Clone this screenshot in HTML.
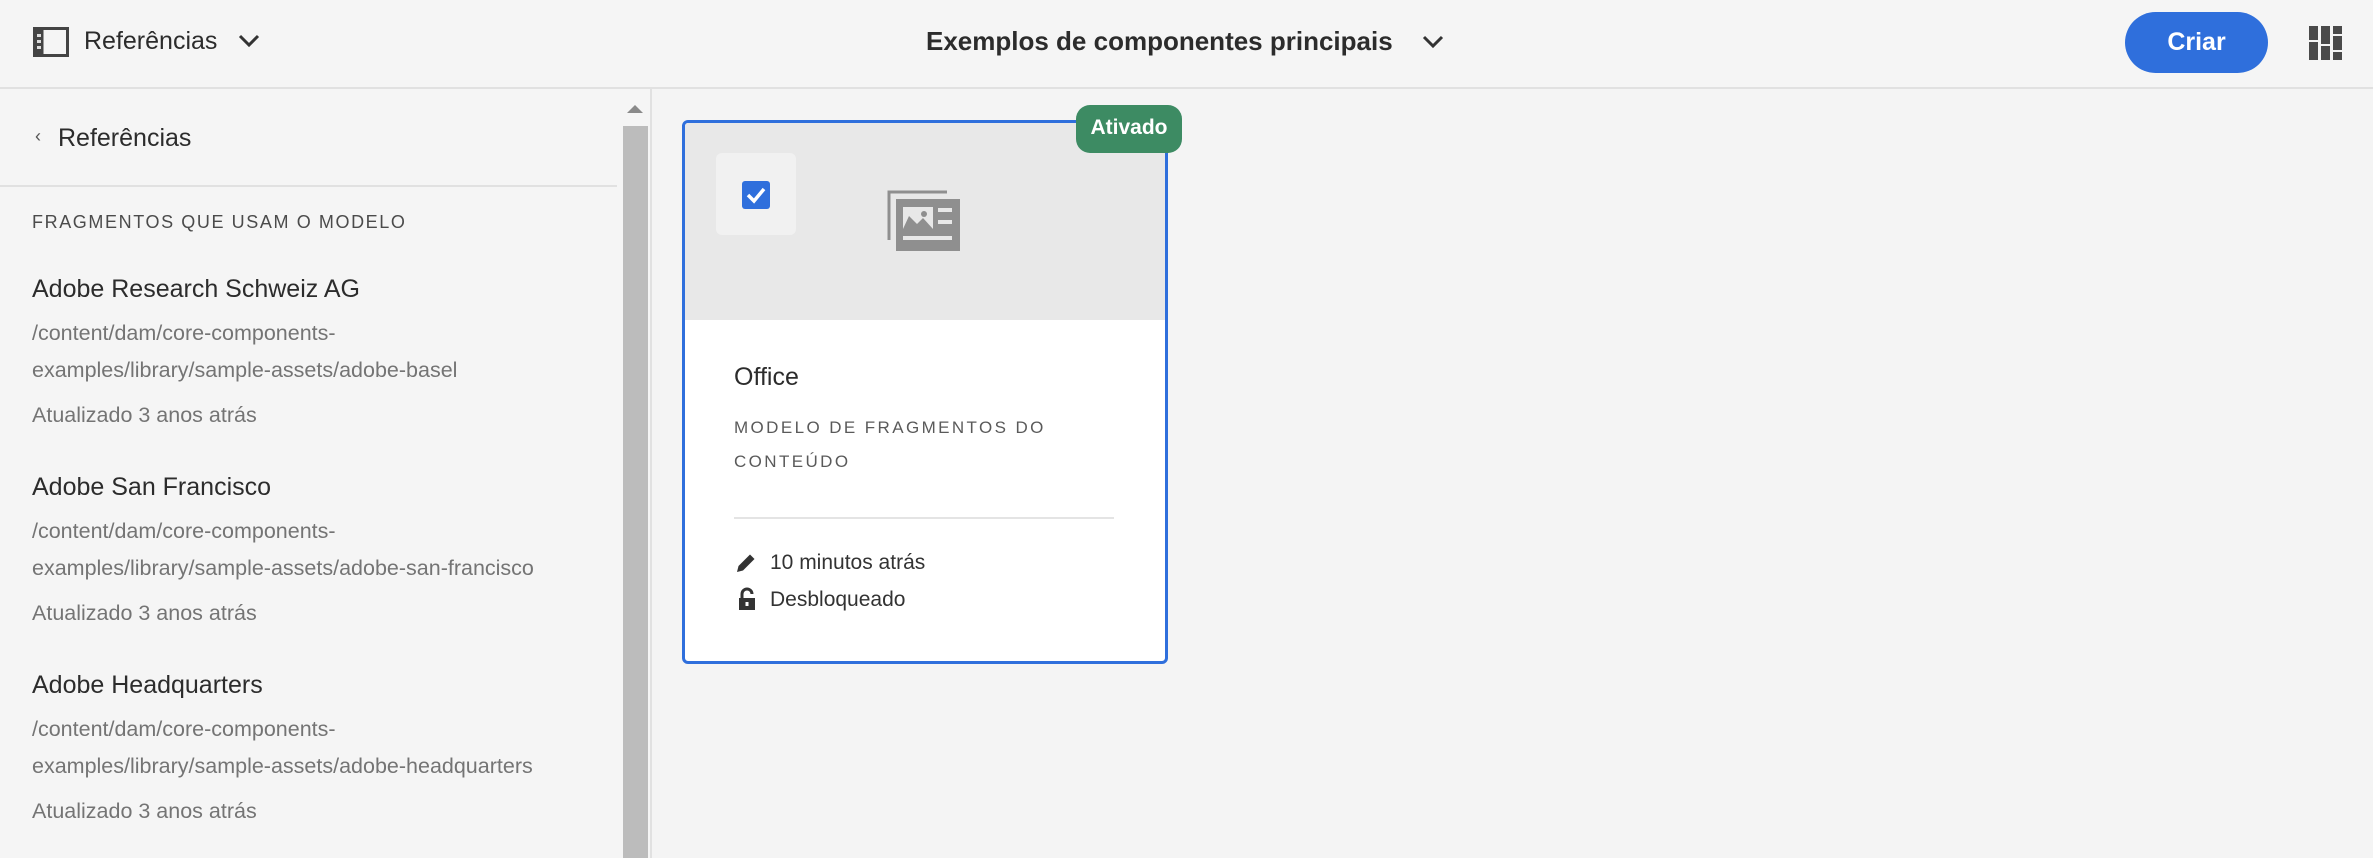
<!DOCTYPE html>
<html><head><meta charset="utf-8"><style>
*{margin:0;padding:0;box-sizing:border-box}
body{width:2373px;height:858px;background:#f4f4f4;font-family:"Liberation Sans",sans-serif;color:#2c2c2c;position:relative;overflow:hidden}
.a{position:absolute;white-space:nowrap}
.hdr{left:0;top:0;width:2373px;height:89px;background:#f5f5f5;border-bottom:2px solid #e1e1e1}
.side{left:0;top:89px;width:652px;height:769px;background:#f5f5f5;border-right:2px solid #e1e1e1}
.t{font-size:25px;color:#2c2c2c}
.p{font-size:21.5px;color:#747474}
.cap{font-size:18px;letter-spacing:1.6px;color:#4b4b4b}
</style></head><body>
<div class="a hdr"></div>
<svg class="a" style="left:33px;top:27px" width="36" height="30" viewBox="0 0 36 30"><rect x="1.5" y="1.5" width="33" height="27" fill="none" stroke="#444" stroke-width="3"/><rect x="1.5" y="1.5" width="9" height="27" fill="#444"/><rect x="4" y="7" width="4" height="3" fill="#ddd"/><rect x="4" y="13" width="4" height="3" fill="#ddd"/><rect x="4" y="19" width="4" height="3" fill="#ddd"/></svg>
<div class="a t" style="left:84px;top:27px;font-size:25px">Referências</div>
<svg class="a" style="left:238px;top:34px" width="22" height="14" viewBox="0 0 22 14"><path d="M2 2 L11 11 L20 2" fill="none" stroke="#333" stroke-width="3"/></svg>
<div class="a" style="left:926px;top:26px;font-size:26px;font-weight:bold;color:#2c2c2c">Exemplos de componentes principais</div>
<svg class="a" style="left:1422px;top:35px" width="22" height="14" viewBox="0 0 22 14"><path d="M2 2 L11 11 L20 2" fill="none" stroke="#333" stroke-width="3"/></svg>
<div class="a" style="left:2125px;top:12px;width:143px;height:61px;border-radius:31px;background:#2f6fdc;color:#fff;font-weight:bold;font-size:25px;text-align:center;line-height:61px">Criar</div>
<svg class="a" style="left:2309px;top:26px" width="34" height="34" viewBox="0 0 34 34" fill="#4a4a4a"><rect x="0" y="0" width="9" height="14"/><rect x="0" y="16" width="9" height="18"/><rect x="12" y="0" width="9" height="18"/><rect x="12" y="20" width="9" height="14"/><rect x="24" y="0" width="9" height="8"/><rect x="24" y="10" width="9" height="14"/><rect x="24" y="26" width="9" height="8"/></svg>
<div class="a side"></div>
<svg class="a" style="left:627px;top:104px" width="16" height="10"><path d="M0 9 L8 1 L16 9Z" fill="#8a8a8a"/></svg>
<div class="a" style="left:623px;top:126px;width:25px;height:732px;background:#bcbcbc"></div>
<div class="a" style="left:35px;top:126px;font-size:18px;color:#555">‹</div>
<div class="a t" style="left:58px;top:124px;font-size:25px">Referências</div>
<div class="a" style="left:0;top:185px;width:617px;height:2px;background:#e1e1e1"></div>
<div class="a cap" style="left:32px;top:212px">FRAGMENTOS QUE USAM O MODELO</div>
<div class="a t" style="left:32px;top:275px">Adobe Research Schweiz AG</div>
<div class="a p" style="left:32px;top:321px">/content/dam/core-components-</div>
<div class="a p" style="left:32px;top:358px">examples/library/sample-assets/adobe-basel</div>
<div class="a p" style="left:32px;top:403px">Atualizado 3 anos atrás</div>
<div class="a t" style="left:32px;top:473px">Adobe San Francisco</div>
<div class="a p" style="left:32px;top:519px">/content/dam/core-components-</div>
<div class="a p" style="left:32px;top:556px">examples/library/sample-assets/adobe-san-francisco</div>
<div class="a p" style="left:32px;top:601px">Atualizado 3 anos atrás</div>
<div class="a t" style="left:32px;top:671px">Adobe Headquarters</div>
<div class="a p" style="left:32px;top:717px">/content/dam/core-components-</div>
<div class="a p" style="left:32px;top:754px">examples/library/sample-assets/adobe-headquarters</div>
<div class="a p" style="left:32px;top:799px">Atualizado 3 anos atrás</div>
<!-- card -->
<div class="a" style="left:682px;top:120px;width:486px;height:544px;border:3px solid #2f6fdc;border-radius:6px;background:#fff;overflow:hidden">
<div style="position:absolute;left:0;top:0;width:480px;height:197px;background:#e8e8e8"></div>
</div>
<div class="a" style="left:716px;top:153px;width:80px;height:82px;background:#f1f1f1;border-radius:6px"></div>
<svg class="a" style="left:741px;top:180px" width="30" height="30" viewBox="0 0 30 30"><rect x="1" y="1" width="28" height="28" rx="3" fill="#2f6fdc"/><path d="M7 15 L13 21 L23 9" fill="none" stroke="#fff" stroke-width="3.5"/></svg>
<svg class="a" style="left:887px;top:190px" width="74" height="62" viewBox="0 0 74 62"><path d="M2 50 V2 H60" fill="none" stroke="#8f8f8f" stroke-width="3"/><rect x="9" y="9" width="64" height="52" fill="#8f8f8f"/><rect x="16" y="17" width="30" height="22" fill="#e8e8e8"/><path d="M16 39 L22 26 L30 34 L36 28 L46 39Z" fill="#8f8f8f"/><circle cx="37" cy="24" r="3" fill="#8f8f8f"/><rect x="51" y="18" width="14" height="4" fill="#e8e8e8"/><rect x="51" y="30" width="14" height="4" fill="#e8e8e8"/><rect x="16" y="46" width="49" height="4" fill="#e8e8e8"/></svg>
<div class="a" style="left:1076px;top:105px;width:106px;height:48px;border-radius:14px;background:#3d8b63;color:#fff;font-weight:bold;font-size:21px;text-align:center;line-height:46px">Ativado</div>
<div class="a t" style="left:734px;top:363px;font-size:25px">Office</div>
<div class="a cap" style="left:734px;top:418px;color:#5a5a5a;font-size:17px;letter-spacing:2.4px">MODELO DE FRAGMENTOS DO</div>
<div class="a cap" style="left:734px;top:452px;color:#5a5a5a;font-size:17px;letter-spacing:2.4px">CONTEÚDO</div>
<div class="a" style="left:734px;top:517px;width:380px;height:2px;background:#e4e4e4"></div>
<svg class="a" style="left:735px;top:552px" width="22" height="22" viewBox="0 0 22 22"><path d="M2 20 L3.5 14 L15 2.5 L19.5 7 L8 18.5Z" fill="#333"/></svg>
<div class="a" style="left:770px;top:551px;font-size:21px;color:#333">10 minutos atrás</div>
<svg class="a" style="left:737px;top:587px" width="20" height="24" viewBox="0 0 20 24"><path d="M5 11 V7 A5 5 0 0 1 15 7" fill="none" stroke="#333" stroke-width="3"/><rect x="2" y="11" width="16" height="12" fill="#333"/><rect x="8.5" y="15" width="3" height="4" fill="#fff"/></svg>
<div class="a" style="left:770px;top:588px;font-size:21px;color:#333">Desbloqueado</div>
</body></html>
